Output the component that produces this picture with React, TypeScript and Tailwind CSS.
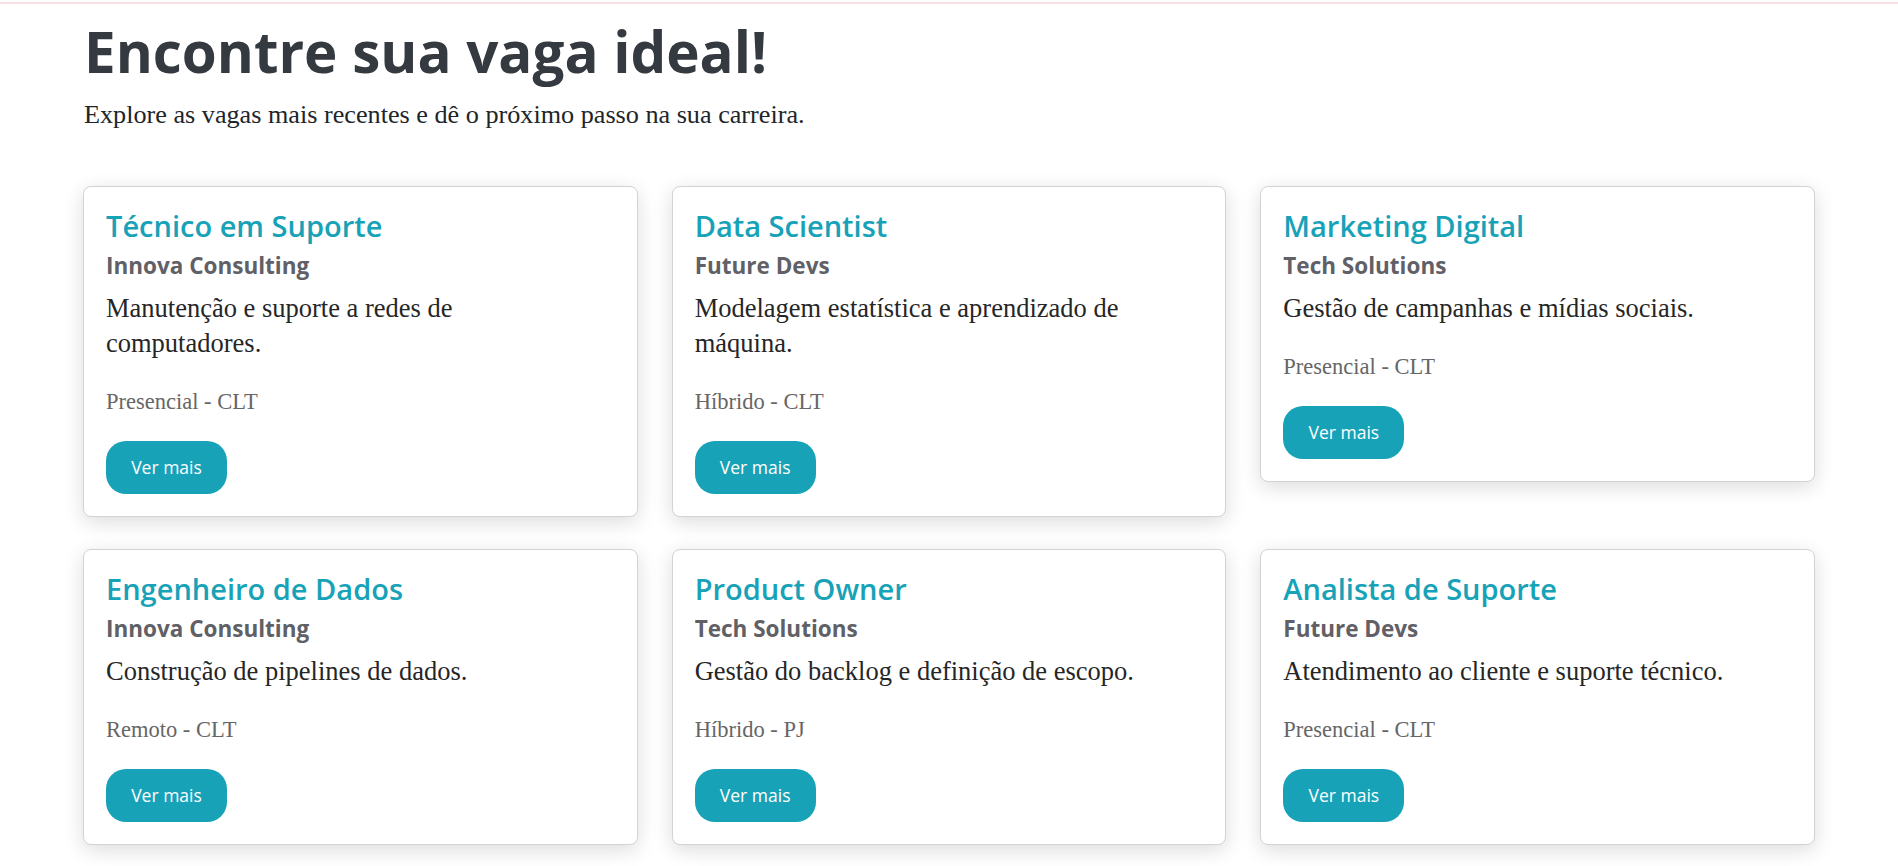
import React from "react";

const jobs = [
  { title: "Técnico em Suporte", company: "Innova Consulting", desc: ["Manutenção e suporte a redes de", "computadores."], loc: "Presencial - CLT" },
  { title: "Data Scientist", company: "Future Devs", desc: ["Modelagem estatística e aprendizado de", "máquina."], loc: "Híbrido - CLT" },
  { title: "Marketing Digital", company: "Tech Solutions", desc: ["Gestão de campanhas e mídias sociais."], loc: "Presencial - CLT" },
  { title: "Engenheiro de Dados", company: "Innova Consulting", desc: ["Construção de pipelines de dados."], loc: "Remoto - CLT" },
  { title: "Product Owner", company: "Tech Solutions", desc: ["Gestão do backlog e definição de escopo."], loc: "Híbrido - PJ" },
  { title: "Analista de Suporte", company: "Future Devs", desc: ["Atendimento ao cliente e suporte técnico."], loc: "Presencial - CLT" },
];

const sans = "font-['Open_Sans',sans-serif]";
const serif = "font-['Liberation_Serif',serif]";

export default function App() {
  return (
    <div className="min-h-[866px] bg-white">
      <div className="pt-[2px]">
        <div className="h-[2px] bg-[#f8e0e5]" />
      </div>
      <main className="px-[83px]">
        <h1 className={`${sans} text-[56.5px] font-bold leading-[67px] text-[#343a40] pt-[14px] pl-[1px]`}>
          Encontre sua vaga ideal!
        </h1>
        <p className={`${serif} text-[26.2px] leading-[30px] text-[#212529] mt-[15px] pl-[1px]`}>
          Explore as vagas mais recentes e dê o próximo passo na sua carreira.
        </p>
        <div className="grid grid-cols-3 gap-x-[34px] gap-y-[32px] items-start mt-[56px]">
          {jobs.map((j) => (
            <div
              key={j.title}
              className="bg-white border border-[#d3d3d3] rounded-lg shadow-[0_5px_20px_rgba(0,0,0,0.14)] px-[22px] pt-[22px] pb-[22px]"
            >
              <h2 className={`${sans} text-[29px] font-semibold leading-[34px] text-[#17a2b8]`}>{j.title}</h2>
              <h3 className={`${sans} text-[22.5px] font-bold leading-[30px] text-[#606066] mt-[8px]`}>{j.company}</h3>
              <p className={`${serif} text-[26.5px] leading-[35px] text-[#262626] mt-[10px]`}>
                {j.desc.map((l, i) => (
                  <React.Fragment key={i}>
                    {i > 0 && <br />}
                    {l}
                  </React.Fragment>
                ))}
              </p>
              <p className={`${serif} text-[22.5px] leading-[28px] text-[#666666] mt-[27px]`}>{j.loc}</p>
              <button className={`${sans} block mt-[25px] h-[53px] w-[121px] rounded-[20px] bg-[#17a2b8] text-white text-[17.5px]`}>
                Ver mais
              </button>
            </div>
          ))}
        </div>
      </main>
    </div>
  );
}
